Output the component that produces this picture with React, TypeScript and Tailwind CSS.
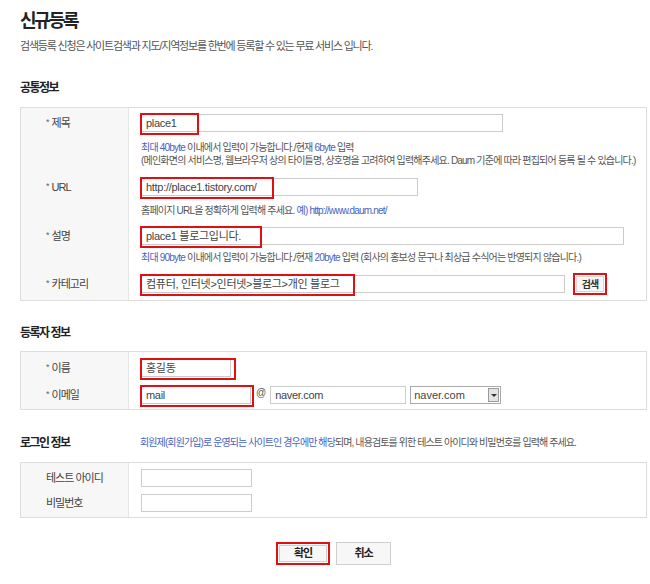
import React from 'react';

const Input: React.FC<{ w: string; value?: string; red?: string }> = ({ w, value, red }) => (
  <div className={`relative h-[18px] ${w} border border-[#cccccc] bg-white pl-[4px] text-[11px] leading-[16px] text-[#444] tracking-[-0.3px]`}>
    {value}
    {red && <div className={`absolute -left-[2px] -top-[2px] h-[22px] ${red} border-2 border-[#e01010]`} />}
  </div>
);

const Label: React.FC<{ text: string; req?: boolean }> = ({ text, req }) => (
  <div className="h-[18px] flex items-center pl-[25px] text-[11px] tracking-[-1px] text-[#444]">
    {req && <span className="mr-[3px] text-[9px] text-[#666]">*</span>}
    {text}
  </div>
);

const Blue: React.FC<{ children: React.ReactNode }> = ({ children }) => (
  <span className="text-[#4a62c4]">{children}</span>
);

const App: React.FC = () => {
  return (
    <div className="w-[650px] h-[584px] bg-white pl-[20px] font-['Liberation_Sans','Noto_Sans_CJK_KR',sans-serif] text-[#333]">
      <h1 className="pt-[11px] text-[18px] leading-[20px] font-bold tracking-[-2.2px] text-[#222]">신규등록</h1>
      <p className="mt-[8px] text-[11px] leading-[14px] tracking-[-1.2px] text-[#555]">
        검색등록 신청은 사이트검색과 지도/지역정보를 한번에 등록할 수 있는 무료 서비스 입니다.
      </p>

      <h2 className="mt-[28px] text-[12px] leading-[14px] font-bold tracking-[-1.5px] text-[#222]">공통정보</h2>
      <div className="mt-[12px] w-[627px] border border-[#dddddd]">
        <div className="flex">
          <div className="w-[108px] shrink-0 bg-[#f7f7f7] border-r border-[#e6e6e6] pt-[6px]"><Label req text="제목" /></div>
          <div className="pl-[12px] pt-[6px] pb-[3px]">
            <Input w="w-[362px]" value="place1" red="w-[59px]" />
            <div className="mt-[9px] text-[10px] leading-[13px] tracking-[-0.8px] text-[#555]">
              <div><Blue>최대 40byte</Blue> 이내에서 입력이 가능합니다./현재 <Blue>6byte</Blue> 입력</div>
              <div>(메인화면의 서비스명, 웹브라우저 상의 타이틀명, 상호명을 고려하여 입력해주세요. Daum 기준에 따라 편집되어 등록 될 수 있습니다.)</div>
            </div>
          </div>
        </div>
        <div className="flex">
          <div className="w-[108px] shrink-0 bg-[#f7f7f7] border-r border-[#e6e6e6] pt-[8px]"><Label req text="URL" /></div>
          <div className="pl-[12px] pt-[8px] pb-[3px]">
            <Input w="w-[277px]" value="http://place1.tistory.com/" red="w-[134px]" />
            <div className="mt-[8px] text-[10px] leading-[13px] tracking-[-0.8px] text-[#555]">
              홈페이지 URL을 정확하게 입력해 주세요. <Blue>예) http://www.daum.net/</Blue>
            </div>
          </div>
        </div>
        <div className="flex">
          <div className="w-[108px] shrink-0 bg-[#f7f7f7] border-r border-[#e6e6e6] pt-[7px]"><Label req text="설명" /></div>
          <div className="pl-[12px] pt-[7px] pb-[2px]">
            <Input w="w-[483px]" value="place1 블로그입니다." red="w-[122px]" />
            <div className="mt-[6px] text-[10px] leading-[13px] tracking-[-0.8px] text-[#555]">
              <Blue>최대 90byte</Blue> 이내에서 입력이 가능합니다./현재 <Blue>20byte</Blue> 입력 (회사의 홍보성 문구나 최상급 수식어는 반영되지 않습니다.)
            </div>
          </div>
        </div>
        <div className="flex">
          <div className="w-[108px] shrink-0 bg-[#f7f7f7] border-r border-[#e6e6e6] pt-[9px] pb-[7px]"><Label req text="카테고리" /></div>
          <div className="pl-[12px] pt-[9px] pb-[7px] flex items-center gap-[8px]">
            <Input w="w-[424px]" value="컴퓨터, 인터넷>인터넷>블로그>개인 블로그" red="w-[215px]" />
            <div className="-my-[2px] h-[22px] w-[34px] border-2 border-[#e01010] p-[1px]">
              <div className="h-full w-full bg-[#f6f6f6] border border-[#d6d6d6] flex items-center justify-center text-[10px] font-bold tracking-[-1px] text-[#333]">검색</div>
            </div>
          </div>
        </div>
      </div>

      <h2 className="mt-[25px] text-[12px] leading-[14px] font-bold tracking-[-1.5px] text-[#222]">등록자 정보</h2>
      <div className="mt-[11px] w-[627px] border border-[#dddddd] flex">
        <div className="w-[108px] shrink-0 bg-[#f7f7f7] border-r border-[#e6e6e6] pt-[7px] pb-[5px] flex flex-col gap-[9px]">
          <Label req text="이름" />
          <Label req text="이메일" />
        </div>
        <div className="pl-[12px] pt-[7px] pb-[5px] flex flex-col gap-[9px]">
          <Input w="w-[90px]" value="홍길동" red="w-[96px]" />
          <div className="flex items-center">
            <Input w="w-[110px]" value="mail" red="w-[114px]" />
            <span className="ml-[5px] mr-[4px] -mt-[6px] text-[10px] text-[#555]">@</span>
            <Input w="w-[136px]" value="naver.com" />
            <div className="ml-[4px] h-[18px] w-[91px] border border-[#aaaaaa] bg-white flex items-center justify-between pl-[3px] pr-[1px] text-[11px] text-[#444]">
              naver.com
              <div className="h-[14px] w-[11px] bg-[#e4e4e4] border border-[#9a9a9a] flex items-center justify-center">
                <div className="w-0 h-0 border-l-[3px] border-r-[3px] border-t-[3px] border-l-transparent border-r-transparent border-t-[#333]" />
              </div>
            </div>
          </div>
        </div>
      </div>

      <div className="mt-[26px] flex items-center">
        <h2 className="w-[120px] text-[12px] leading-[14px] font-bold tracking-[-1.5px] text-[#222]">로그인 정보</h2>
        <p className="text-[10px] leading-[14px] tracking-[-0.9px] text-[#555]">
          <Blue>회원제(회원가입)로 운영되는 사이트인 경우에만 해당</Blue>되며, 내용검토를 위한 테스트 아이디와 비밀번호를 입력해 주세요.
        </p>
      </div>
      <div className="mt-[12px] w-[627px] border border-[#dddddd] flex">
        <div className="w-[108px] shrink-0 bg-[#f7f7f7] border-r border-[#e6e6e6] pt-[6px] pb-[5px] flex flex-col gap-[7px]">
          <Label text="테스트 아이디" />
          <Label text="비밀번호" />
        </div>
        <div className="pl-[12px] pt-[6px] pb-[5px] flex flex-col gap-[7px]">
          <Input w="w-[111px]" />
          <Input w="w-[111px]" />
        </div>
      </div>

      <div className="mt-[24px] w-[627px] flex justify-center gap-[6px]">
        <div className="h-[23px] w-[54px] border-2 border-[#e01010] p-[1px]">
          <div className="h-full w-full bg-[#f7f7f7] border border-[#cfcfcf] flex items-center justify-center text-[11px] font-bold tracking-[-1px] text-[#222]">확인</div>
        </div>
        <div className="h-[23px] w-[55px] bg-[#f7f7f7] border border-[#cfcfcf] flex items-center justify-center text-[11px] font-bold tracking-[-1px] text-[#222]">취소</div>
      </div>
    </div>
  );
};

export default App;
